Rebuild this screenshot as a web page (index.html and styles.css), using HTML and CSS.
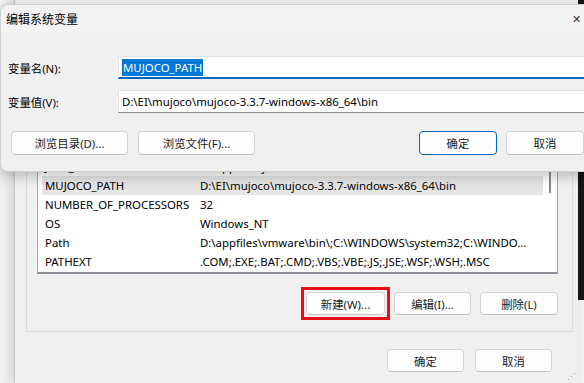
FILE: index.html
```html
<!DOCTYPE html>
<html lang="zh-CN">
<head>
  <meta charset="UTF-8">
  <title>编辑系统变量</title>
  <link rel="stylesheet" href="styles.css">
</head>
<body>
  <div class="desk">
    <section class="env-window">
      <div class="group">
        <div class="var-list">
          <div class="row"><span class="name">JAVA_HOME</span><span class="value">D:\appfiles\jdk-17</span></div>
          <div class="row selected"><span class="name">MUJOCO_PATH</span><span class="value">D:\EI\mujoco\mujoco-3.3.7-windows-x86_64\bin</span></div>
          <div class="row"><span class="name">NUMBER_OF_PROCESSORS</span><span class="value">32</span></div>
          <div class="row"><span class="name">OS</span><span class="value">Windows_NT</span></div>
          <div class="row"><span class="name">Path</span><span class="value">D:\appfiles\vmware\bin\;C:\WINDOWS\system32;C:\WINDO...</span></div>
          <div class="row"><span class="name">PATHEXT</span><span class="value">.COM;.EXE;.BAT;.CMD;.VBS;.VBE;.JS;.JSE;.WSF;.WSH;.MSC</span></div>
          <span class="scroll-thumb"></span>
        </div>
        <div class="list-actions">
          <span class="marked"><button class="btn w79">新建(W)...</button></span>
          <button class="btn w77">编辑(I)...</button>
          <button class="btn w78">删除(L)</button>
        </div>
      </div>
      <div class="window-actions">
        <button class="btn w77">确定</button>
        <button class="btn w77">取消</button>
      </div>
      <span class="grip">⋰</span>
    </section>

    <section class="edit-dialog">
      <header class="titlebar">
        <span class="title">编辑系统变量</span>
        <span class="close">✕</span>
      </header>
      <div class="form">
        <div class="field">
          <label>变量名(N):</label>
          <div class="input focused"><span class="selection">MUJOCO_PATH</span></div>
        </div>
        <div class="field">
          <label>变量值(V):</label>
          <div class="input">D:\EI\mujoco\mujoco-3.3.7-windows-x86_64\bin</div>
        </div>
      </div>
      <div class="dialog-actions">
        <div class="browse">
          <button class="btn wide">浏览目录(D)...</button>
          <button class="btn wide">浏览文件(F)...</button>
        </div>
        <div class="confirm">
          <button class="btn primary w78">确定</button>
          <button class="btn w78">取消</button>
        </div>
      </div>
    </section>
  </div>
</body>
</html>
```

FILE: styles.css
```css
* { box-sizing: border-box; }
body {
  margin: 0;
  font-family: "Noto Sans", "Noto Sans CJK SC", sans-serif;
  font-size: 11.4px;
  color: #000;
}
.desk {
  position: relative;
  width: 584px;
  height: 383px;
  overflow: hidden;
  background: #f2f2f2;
}
.desk::before {
  content: "";
  position: absolute;
  right: 0;
  top: 0;
  width: 6px;
  height: 300px;
  background: #161616;
}

/* background window: environment variables */
.env-window {
  position: absolute;
  left: 14px;
  top: 0;
  width: 564px;
  height: 383px;
  background: #f0f0f0;
  border-left: 1px solid #c9c9c9;
  box-shadow: -4px 0 10px rgba(0, 0, 0, 0.12);
  padding-top: 140px;
}
.group {
  margin-left: 11px;
  width: 547px;
  border: 1px solid #dcdcdc;
  padding: 15px 14px 16px 10px;
}
.var-list {
  position: relative;
  height: 118px;
  background: #fff;
  border: 1px solid #a9a9a9;
  border-bottom: 2px solid #8c8f96;
  padding: 0 14px 0 4px;
}
.row {
  display: flex;
  height: 19px;
  align-items: center;
  padding-left: 3px;
  white-space: nowrap;
  overflow: hidden;
}
.row.selected { background: #e5e5e5; }
.row .name { width: 155px; flex: none; }
.scroll-thumb {
  position: absolute;
  right: 6px;
  top: 13px;
  width: 2px;
  height: 23px;
  background: #8a8a8a;
}
.list-actions {
  display: flex;
  justify-content: flex-end;
  gap: 9px;
  margin-top: 18px;
}
.marked {
  display: flex;
  margin: -5px;
  padding: 2px;
  border: 3px solid #e50f18;
}
.window-actions {
  display: flex;
  justify-content: flex-end;
  gap: 11px;
  margin: 17px 26px 0 0;
}
.grip {
  position: absolute;
  right: 2px;
  bottom: 0;
  font-size: 9px;
  color: #9a9a9a;
}

.btn {
  font: inherit;
  height: 23px;
  padding: 0;
  background: #fdfdfd;
  border: 1px solid #d4d4d4;
  border-bottom-color: #c2c2c2;
  border-radius: 4px;
  color: #1a1a1a;
}
.w77 { width: 77px; }
.w78 { width: 78px; }
.w79 { width: 79px; }
.wide { width: 117px; }

/* foreground dialog */
.edit-dialog {
  position: absolute;
  left: 0;
  top: 4px;
  width: 600px;
  height: 168px;
  background: #f0f0f0;
  border-radius: 8px;
  border: 1px solid #cfcfcf;
  box-shadow: 0 4px 14px rgba(0, 0, 0, 0.24);
}
.titlebar {
  display: flex;
  align-items: center;
  justify-content: space-between;
  height: 27px;
  padding-left: 5px;
  background: #f3f3f3;
  border-radius: 8px 8px 0 0;
  font-size: 12px;
}
.close {
  width: 46px;
  text-align: center;
  font-size: 11px;
  color: #333;
}
.form {
  display: flex;
  flex-direction: column;
  gap: 11px;
  padding: 24px 11px 0 7px;
}
.field {
  display: flex;
  align-items: center;
}
.field label { width: 110px; flex: none; }
.input {
  flex: 1;
  height: 23px;
  background: #fff;
  border: 1px solid #e3e3e3;
  border-bottom-color: #8a8a8a;
  padding: 2px 3px;
  white-space: nowrap;
  line-height: 17px;
}
.input.focused {
  border-bottom: 2px solid #0067c0;
}
.selection {
  display: inline-block;
  background: #0078d7;
  color: #fff;
  padding: 0 1px;
}
.dialog-actions {
  display: flex;
  justify-content: space-between;
  padding: 18px 15px 0 10px;
}
.browse, .confirm {
  display: flex;
  gap: 10px;
}
.confirm { gap: 9px; }
.dialog-actions .btn { height: 24px; }
.btn.primary { border-color: #0067c0; }
```
